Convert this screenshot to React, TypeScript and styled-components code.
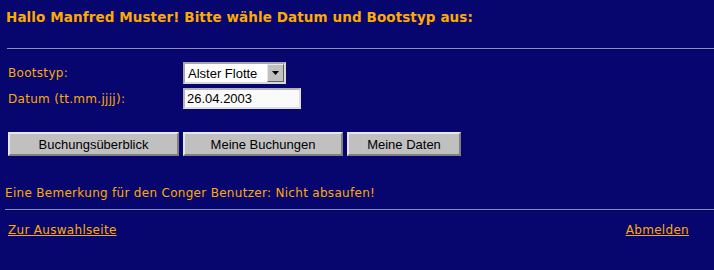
import React from 'react';
import styled, { createGlobalStyle } from 'styled-components';

const GlobalStyle = createGlobalStyle`
    html, body {
        margin: 0;
        padding: 0;
        background: #06066e;
    }
`;

const Page = styled.div`
    min-height: 270px;
    background: #06066e;
    color: #ffaa00;
    font-family: "DejaVu Sans", Verdana, sans-serif;
    font-size: 12px;
    letter-spacing: 0.3px;
`;

const Heading = styled.h1`
    margin: 0;
    padding: 9px 0 0 6px;
    font-size: 13.5px;
    line-height: 16px;
    letter-spacing: 0.1px;
    font-weight: bold;
    color: #ffaa00;
`;

const Rule = styled.div<{ $top: number; $left: number }>`
    margin: ${p => p.$top}px 0 0 ${p => p.$left}px;
    border-top: 1px solid #8c8cd0;
    border-bottom: 1px solid #03034a;
`;

const Form = styled.div`
    display: grid;
    grid-template-columns: 175px auto;
    row-gap: 4px;
    margin: 12px 0 0 8px;
    align-items: center;
`;

const Label = styled.label`
    line-height: 14px;
`;

const Control = styled.div<{ $height: number }>`
    height: ${p => p.$height}px;
    display: flex;
    align-items: center;
`;

const SelectBox = styled.div`
    box-sizing: border-box;
    width: 103px;
    height: 22px;
    display: flex;
    align-items: stretch;
    background: #ffffff;
    border: 2px solid;
    border-color: #a8a8a8 #d8d8d8 #d8d8d8 #a8a8a8;
`;

const NativeSelect = styled.select`
    appearance: none;
    flex: 1;
    min-width: 0;
    border: none;
    outline: none;
    background: transparent;
    padding: 0 0 0 3px;
    font-family: "Liberation Sans", Arial, sans-serif;
    font-size: 13px;
    letter-spacing: 0;
    color: #000;
`;

const DropButton = styled.span`
    box-sizing: border-box;
    width: 17px;
    display: flex;
    align-items: center;
    justify-content: center;
    background: #c0c0c0;
    border: 1px solid;
    border-color: #e8e8e8 #606060 #606060 #e8e8e8;
    pointer-events: none;
`;

const TextInput = styled.input`
    box-sizing: border-box;
    width: 118px;
    height: 21px;
    margin: 0;
    padding: 0 2px;
    background: #fafafa;
    border: 2px solid;
    border-color: #b4b4b4 #dedede #dedede #b4b4b4;
    font-family: "Liberation Sans", Arial, sans-serif;
    font-size: 13px;
    letter-spacing: 0;
    color: #000;
    outline: none;
`;

const ButtonRow = styled.div`
    display: flex;
    gap: 4px;
    margin: 23px 0 0 8px;
`;

const Button = styled.button<{ $width: number }>`
    box-sizing: border-box;
    width: ${p => p.$width}px;
    height: 24px;
    margin: 0;
    padding: 0;
    background: #c0c0c0;
    border: 2px solid;
    border-color: #e6e6e6 #808080 #808080 #e6e6e6;
    font-family: "Liberation Sans", Arial, sans-serif;
    font-size: 13px;
    letter-spacing: 0;
    color: #000;
`;

const Remark = styled.p`
    margin: 30px 0 0 5px;
    line-height: 14px;
`;

const LinkRow = styled.div`
    display: flex;
    justify-content: space-between;
    margin: 12px 25px 0 8px;
    line-height: 14px;
`;

const NavLink = styled.a`
    color: #ffaa00;
    text-decoration: underline;
`;

export default function App() {
    return (
        <Page>
            <GlobalStyle />
            <Heading>Hallo Manfred Muster! Bitte wähle Datum und Bootstyp aus:</Heading>
            <Rule $top={23} $left={7} />

            <Form>
                <Label htmlFor="boot">Bootstyp:</Label>
                <Control $height={22}>
                    <SelectBox>
                        <NativeSelect id="boot" defaultValue="alster">
                            <option value="alster">Alster Flotte</option>
                        </NativeSelect>
                        <DropButton>
                            <svg width="7" height="4" viewBox="0 0 7 4">
                                <path d="M0 0h7L3.5 4z" fill="#000" />
                            </svg>
                        </DropButton>
                    </SelectBox>
                </Control>

                <Label htmlFor="datum">Datum (tt.mm.jjjj):</Label>
                <Control $height={21}>
                    <TextInput id="datum" defaultValue="26.04.2003" />
                </Control>
            </Form>

            <ButtonRow>
                <Button $width={171}>Buchungsüberblick</Button>
                <Button $width={160}>Meine Buchungen</Button>
                <Button $width={114}>Meine Daten</Button>
            </ButtonRow>

            <Remark>Eine Bemerkung für den Conger Benutzer: Nicht absaufen!</Remark>
            <Rule $top={9} $left={5} />

            <LinkRow>
                <NavLink href="#">Zur Auswahlseite</NavLink>
                <NavLink href="#">Abmelden</NavLink>
            </LinkRow>
        </Page>
    );
}
